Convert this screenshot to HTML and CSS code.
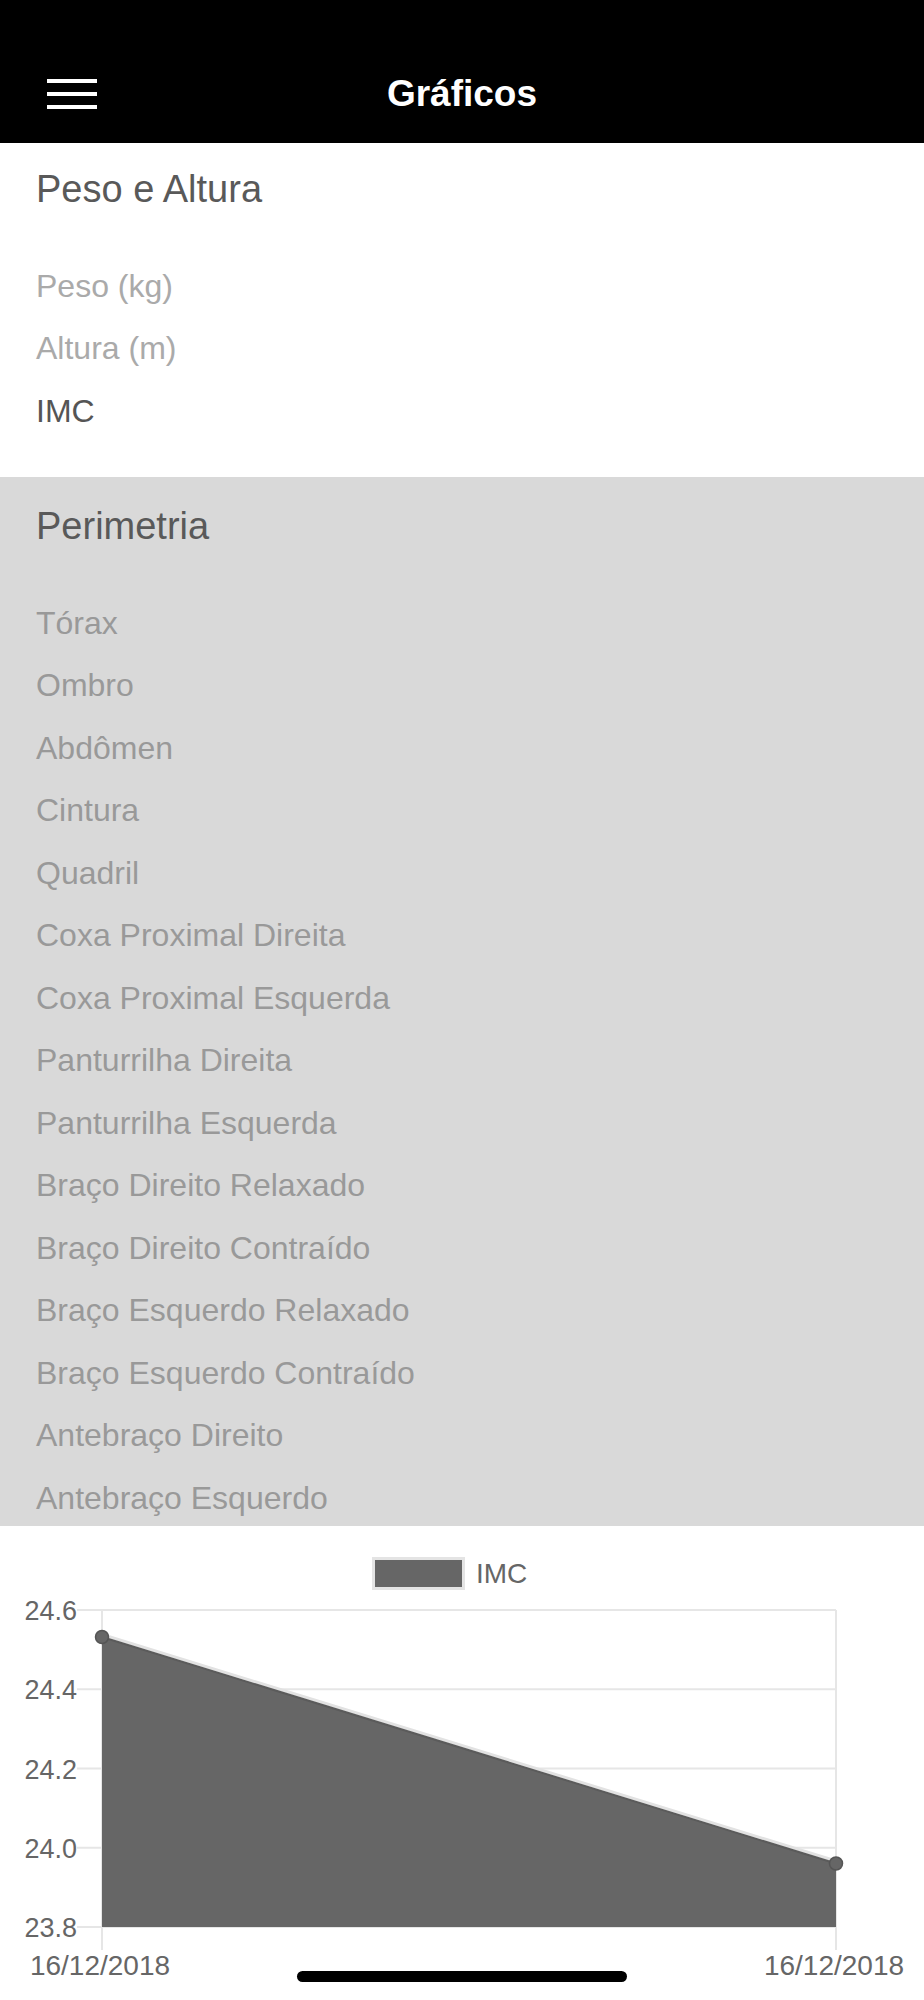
FILE: index.html
```html
<!DOCTYPE html>
<html lang="pt-BR">
<head>
    <meta charset="UTF-8">
    <meta name="viewport" content="width=device-width, initial-scale=1.0">
    <title>Gráficos</title>
    <link rel="stylesheet" href="styles.css">
</head>
<body>

    <div id="topBar">
        <div class="navRow">
            <div class="menuButton">
                <span></span>
                <span></span>
                <span></span>
            </div>
            <div class="pageTitle">Gráficos</div>
            <div></div>
        </div>
    </div>

    <div class="group">
        <div class="groupTitle">Peso e Altura</div>
        <ul class="groupList">
            <li>Peso (kg)</li>
            <li>Altura (m)</li>
            <li class="active">IMC</li>
        </ul>
    </div>

    <div class="group grey">
        <div class="groupTitle">Perimetria</div>
        <ul class="groupList">
            <li>Tórax</li>
            <li>Ombro</li>
            <li>Abdômen</li>
            <li>Cintura</li>
            <li>Quadril</li>
            <li>Coxa Proximal Direita</li>
            <li>Coxa Proximal Esquerda</li>
            <li>Panturrilha Direita</li>
            <li>Panturrilha Esquerda</li>
            <li>Braço Direito Relaxado</li>
            <li>Braço Direito Contraído</li>
            <li>Braço Esquerdo Relaxado</li>
            <li>Braço Esquerdo Contraído</li>
            <li>Antebraço Direito</li>
            <li>Antebraço Esquerdo</li>
        </ul>
    </div>

    <div id="chartBox">
        <svg class="chart" viewBox="0 0 924 474" width="924" height="474">
            <!-- legenda -->
            <rect x="373.5" y="32.5" width="90" height="30" fill="#666" stroke="#e4e4e4" stroke-width="3"/>
            <text x="476" y="57" class="legendText">IMC</text>

            <!-- grade -->
            <g stroke="#e6e6e6" stroke-width="2">
                <line x1="77" y1="84" x2="836" y2="84"/>
                <line x1="77" y1="163.25" x2="836" y2="163.25"/>
                <line x1="77" y1="242.5" x2="836" y2="242.5"/>
                <line x1="77" y1="321.75" x2="836" y2="321.75"/>
                <line x1="77" y1="401" x2="836" y2="401"/>
                <line x1="102" y1="84" x2="102" y2="424"/>
                <line x1="836" y1="84" x2="836" y2="424"/>
            </g>

            <!-- eixo y -->
            <g class="axisText" text-anchor="end">
                <text x="77" y="94">24.6</text>
                <text x="77" y="173">24.4</text>
                <text x="77" y="252.5">24.2</text>
                <text x="77" y="331.5">24.0</text>
                <text x="77" y="411">23.8</text>
            </g>

            <!-- dados -->
            <polygon points="102,111 836,337.5 836,401 102,401" fill="#666"/>
            <line x1="102" y1="108.5" x2="836" y2="335" stroke="#e2e2e2" stroke-width="3"/>
            <line x1="102" y1="111" x2="836" y2="337.5" stroke="#5b5b5b" stroke-width="2"/>
            <circle cx="102" cy="111" r="6.5" fill="#666" stroke="#555" stroke-width="1.5"/>
            <circle cx="836" cy="337.5" r="6.5" fill="#666" stroke="#555" stroke-width="1.5"/>

            <!-- eixo x -->
            <g class="axisText dateText" text-anchor="middle">
                <text x="100" y="449">16/12/2018</text>
                <text x="834" y="449">16/12/2018</text>
            </g>
        </svg>
    </div>

    <div class="homeIndicator"></div>

</body>
</html>
```

FILE: styles.css
```css
body {
    font-family: 'Liberation Sans', Arial, sans-serif;
    margin: 0;
    padding: 0;
    width: 924px;
    height: 2000px;
    background-color: #FFFFFF;
    overflow: hidden;
    position: relative;
}

#topBar {
    height: 143px;
    padding-top: 44px;
    box-sizing: border-box;
    background-color: #000000;
}

.navRow {
    height: 99px;
    display: grid;
    grid-template-columns: 1fr auto 1fr;
    align-items: center;
}

.menuButton {
    padding-left: 47px;
    display: flex;
    flex-direction: column;
    gap: 9px;
}

.menuButton span {
    display: block;
    width: 50px;
    height: 4px;
    background-color: #FFFFFF;
}

.pageTitle {
    color: #FFFFFF;
    font-size: 37px;
    font-weight: bold;
}

.group {
    padding: 1.5px 0 34.75px 36px;
}

.group.grey {
    background-color: #D9D9D9;
    padding-top: 4.5px;
    padding-bottom: 0;
    height: 1049px;
    box-sizing: border-box;
    overflow: hidden;
}

.groupTitle {
    height: 89px;
    line-height: 89px;
    font-size: 38px;
    color: #595959;
}

.groupList {
    list-style: none;
    margin: 21.25px 0 0 0;
    padding: 0;
}

.groupList li {
    height: 62.5px;
    line-height: 62.5px;
    font-size: 32px;
    color: #AAAAAA;
}

.groupList li.active {
    color: #555555;
}

.grey .groupList li {
    color: #999999;
}

#chartBox {
    height: 474px;
}

.chart {
    display: block;
}

.legendText {
    font-size: 28px;
    fill: #666666;
}

.axisText {
    font-size: 27px;
    fill: #666666;
}

.dateText {
    font-size: 28px;
}

.homeIndicator {
    position: absolute;
    left: 297px;
    top: 1971px;
    width: 330px;
    height: 11px;
    border-radius: 6px;
    background-color: #000000;
}
```
